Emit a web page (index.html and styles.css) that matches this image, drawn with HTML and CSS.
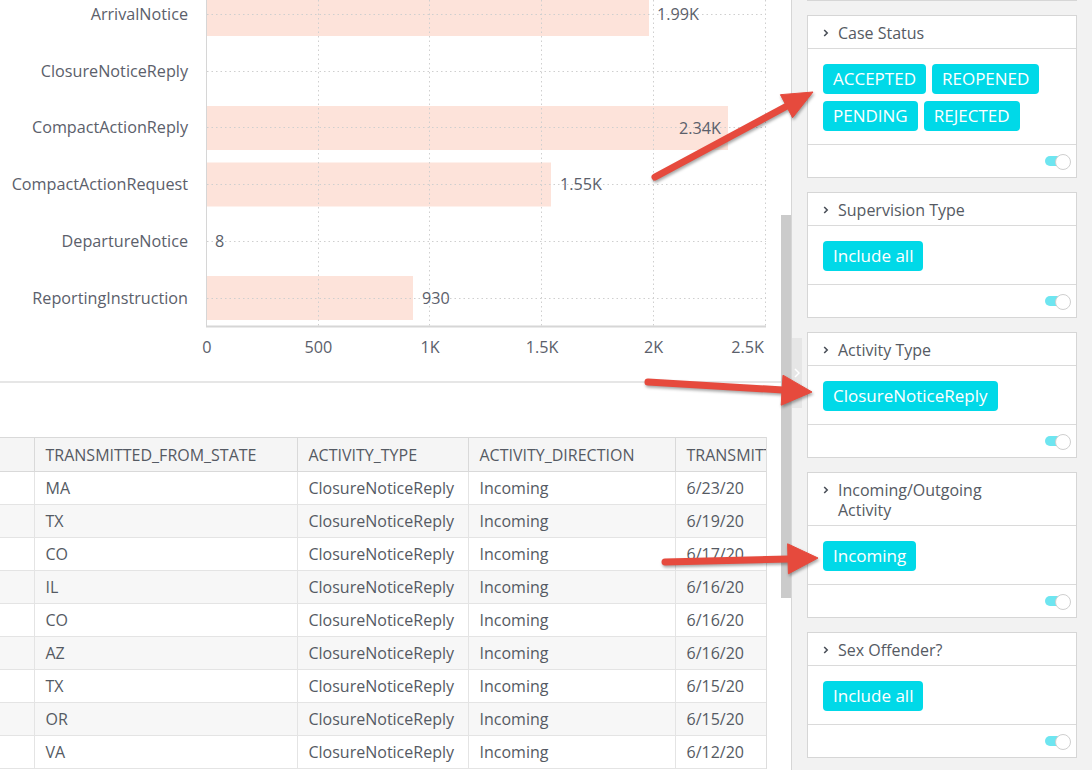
FILE: index.html
```html
<!DOCTYPE html>
<html lang="en">
<head>
<meta charset="utf-8">
<title>Activity Dashboard</title>
<link rel="stylesheet" href="styles.css">
</head>
<body>
<div class="app">
  <main class="main">
    <div class="content">
      <div class="chart">
        <svg class="chart-svg" width="781" height="381" viewBox="0 0 781 381">
          <g class="bars">
            <rect x="207" y="-8" width="442" height="44"/>
            <rect x="207" y="106" width="521" height="44"/>
            <rect x="207" y="162.5" width="344" height="44"/>
            <rect x="207" y="276" width="206" height="44"/>
          </g>
          <g class="gridlines">
            <line x1="207" x2="766" y1="14.5" y2="14.5"/>
            <line x1="207" x2="766" y1="71.5" y2="71.5"/>
            <line x1="207" x2="766" y1="127.5" y2="127.5"/>
            <line x1="207" x2="766" y1="184.5" y2="184.5"/>
            <line x1="207" x2="766" y1="241.5" y2="241.5"/>
            <line x1="207" x2="766" y1="298.5" y2="298.5"/>
            <line x1="318.5" x2="318.5" y1="0" y2="326"/>
            <line x1="429.5" x2="429.5" y1="0" y2="326"/>
            <line x1="541.5" x2="541.5" y1="0" y2="326"/>
            <line x1="653.5" x2="653.5" y1="0" y2="326"/>
            <line x1="765.5" x2="765.5" y1="0" y2="326"/>
          </g>
          <g class="axes">
            <line x1="206.5" x2="206.5" y1="0" y2="327"/>
            <line x1="206" x2="766" y1="326.5" y2="326.5" class="xaxis"/>
          </g>
          <g class="cat-labels">
            <text x="188" y="19.5">ArrivalNotice</text>
            <text x="188" y="76.5">ClosureNoticeReply</text>
            <text x="188" y="133">CompactActionReply</text>
            <text x="188" y="190">CompactActionRequest</text>
            <text x="188" y="247">DepartureNotice</text>
            <text x="188" y="303.5">ReportingInstruction</text>
          </g>
          <g class="val-labels">
            <text x="657" y="19.5">1.99K</text>
            <text x="721" y="133.5" class="end">2.34K</text>
            <text x="560" y="190">1.55K</text>
            <text x="215" y="247">8</text>
            <text x="422" y="304">930</text>
          </g>
          <g class="ticks">
            <text x="207" y="353">0</text>
            <text x="318.5" y="353">500</text>
            <text x="430" y="353">1K</text>
            <text x="542" y="353">1.5K</text>
            <text x="653.5" y="353">2K</text>
            <text x="764" y="353" class="end">2.5K</text>
          </g>
        </svg>
      </div>

      <div class="table-wrap">
        <table class="grid">
          <colgroup>
            <col class="c1"><col class="c2"><col class="c3"><col class="c4"><col class="c5">
          </colgroup>
          <thead>
            <tr><th></th><th>TRANSMITTED_FROM_STATE</th><th>ACTIVITY_TYPE</th><th>ACTIVITY_DIRECTION</th><th>TRANSMITTED_DATE</th></tr>
          </thead>
          <tbody>
            <tr><td></td><td>MA</td><td>ClosureNoticeReply</td><td>Incoming</td><td>6/23/20</td></tr>
            <tr><td></td><td>TX</td><td>ClosureNoticeReply</td><td>Incoming</td><td>6/19/20</td></tr>
            <tr><td></td><td>CO</td><td>ClosureNoticeReply</td><td>Incoming</td><td>6/17/20</td></tr>
            <tr><td></td><td>IL</td><td>ClosureNoticeReply</td><td>Incoming</td><td>6/16/20</td></tr>
            <tr><td></td><td>CO</td><td>ClosureNoticeReply</td><td>Incoming</td><td>6/16/20</td></tr>
            <tr><td></td><td>AZ</td><td>ClosureNoticeReply</td><td>Incoming</td><td>6/16/20</td></tr>
            <tr><td></td><td>TX</td><td>ClosureNoticeReply</td><td>Incoming</td><td>6/15/20</td></tr>
            <tr><td></td><td>OR</td><td>ClosureNoticeReply</td><td>Incoming</td><td>6/15/20</td></tr>
            <tr><td></td><td>VA</td><td>ClosureNoticeReply</td><td>Incoming</td><td>6/12/20</td></tr>
          </tbody>
        </table>
      </div>
    </div>
    <div class="vscroll"><div class="thumb"></div></div>
  </main>

  <aside class="sidebar">
    <div class="handle">
      <svg width="6" height="10" viewBox="0 0 6 10"><polyline points="1,1 5,5 1,9" fill="none" stroke="#ffffff" stroke-width="1.5"/></svg>
    </div>
    <div class="cards">
      <div class="card stub"></div>

      <section class="card">
        <header class="card-head">
          <span class="chev"><svg width="6" height="8" viewBox="0 0 6 8"><polyline points="1.2,1 4.2,4 1.2,7" fill="none" stroke="#4a4f58" stroke-width="1.6"/></svg></span>
          <span class="title">Case Status</span>
        </header>
        <div class="card-body">
          <span class="pill">ACCEPTED</span>
          <span class="pill">REOPENED</span>
          <span class="pill">PENDING</span>
          <span class="pill">REJECTED</span>
        </div>
        <footer class="card-foot"><span class="toggle"></span></footer>
      </section>

      <section class="card">
        <header class="card-head">
          <span class="chev"><svg width="6" height="8" viewBox="0 0 6 8"><polyline points="1.2,1 4.2,4 1.2,7" fill="none" stroke="#4a4f58" stroke-width="1.6"/></svg></span>
          <span class="title">Supervision Type</span>
        </header>
        <div class="card-body">
          <span class="pill">Include all</span>
        </div>
        <footer class="card-foot"><span class="toggle"></span></footer>
      </section>

      <section class="card">
        <header class="card-head">
          <span class="chev"><svg width="6" height="8" viewBox="0 0 6 8"><polyline points="1.2,1 4.2,4 1.2,7" fill="none" stroke="#4a4f58" stroke-width="1.6"/></svg></span>
          <span class="title">Activity Type</span>
        </header>
        <div class="card-body">
          <span class="pill">ClosureNoticeReply</span>
        </div>
        <footer class="card-foot"><span class="toggle"></span></footer>
      </section>

      <section class="card">
        <header class="card-head">
          <span class="chev"><svg width="6" height="8" viewBox="0 0 6 8"><polyline points="1.2,1 4.2,4 1.2,7" fill="none" stroke="#4a4f58" stroke-width="1.6"/></svg></span>
          <span class="title">Incoming/Outgoing Activity</span>
        </header>
        <div class="card-body">
          <span class="pill">Incoming</span>
        </div>
        <footer class="card-foot"><span class="toggle"></span></footer>
      </section>

      <section class="card">
        <header class="card-head">
          <span class="chev"><svg width="6" height="8" viewBox="0 0 6 8"><polyline points="1.2,1 4.2,4 1.2,7" fill="none" stroke="#4a4f58" stroke-width="1.6"/></svg></span>
          <span class="title">Sex Offender?</span>
        </header>
        <div class="card-body">
          <span class="pill">Include all</span>
        </div>
        <footer class="card-foot"><span class="toggle"></span></footer>
      </section>
    </div>
  </aside>
</div>

<svg class="annotations" width="1092" height="770" viewBox="0 0 1092 770">
  <g class="arrow">
    <line x1="655" y1="177" x2="787" y2="106"/>
    <polygon points="813,92 780.4,94.7 792.6,117.7"/>
  </g>
  <g class="arrow">
    <line x1="648" y1="382" x2="783" y2="390"/>
    <polygon points="812,392 783,375.2 781.2,405.2"/>
  </g>
  <g class="arrow">
    <line x1="665" y1="562" x2="789" y2="559"/>
    <polygon points="818,558 787.6,543.8 788.4,573.8"/>
  </g>
</svg>
</body>
</html>
```

FILE: styles.css
```css
* { box-sizing: border-box; }

html, body {
  margin: 0;
  padding: 0;
}

body {
  width: 1092px;
  height: 770px;
  overflow: hidden;
  position: relative;
  background: #ffffff;
  font-family: "Open Sans", "Liberation Sans", sans-serif;
  font-size: 16px;
  color: #555a63;
}

.app {
  display: flex;
  height: 770px;
}

/* ---------- main area ---------- */
.main {
  display: flex;
  width: 791px;
  flex: none;
}

.content {
  width: 781px;
  overflow: hidden;
}

.chart {
  height: 383px;
  border-bottom: 2px solid #e6e6e6;
}

.chart-svg { display: block; }

.chart-svg text {
  font-family: "Open Sans", "Liberation Sans", sans-serif;
  font-size: 16.2px;
  fill: #5b606b;
}

.bars rect { fill: #fde3da; }

.gridlines line {
  stroke: #cfcfcf;
  stroke-width: 1;
  stroke-dasharray: 1.5 3;
}

.axes line {
  stroke: #d6d6d6;
  stroke-width: 1;
}

.axes .xaxis { stroke-width: 2; }

.cat-labels text { text-anchor: end; }
.ticks text { text-anchor: middle; }
.chart-svg text.end { text-anchor: end; }

.table-wrap {
  margin-top: 54px;
  width: 767px;
  overflow: hidden;
  border-right: 1px solid #dddddd;
}

.grid {
  border-collapse: collapse;
  table-layout: fixed;
  width: 875px;
}

.grid .c1 { width: 34px; }
.grid .c2 { width: 263px; }
.grid .c3 { width: 171px; }
.grid .c4 { width: 207px; }
.grid .c5 { width: 200px; }

.grid th,
.grid td {
  height: 33px;
  padding: 0 11px;
  border: 1px solid #e4e4e4;
  text-align: left;
  font-weight: 400;
  white-space: nowrap;
  overflow: hidden;
  color: #555a63;
  font-size: 16px;
}

.grid th {
  height: 34px;
  background: #f5f5f5;
  border-color: #d9d9d9;
}

.grid tr > :first-child { border-left: none; }

.grid tbody tr:nth-child(even) td { background: #f7f7f7; }

.vscroll {
  width: 10px;
  flex: none;
}

.thumb {
  margin-top: 215px;
  height: 383px;
  background: #cbcbcb;
}

/* ---------- sidebar ---------- */
.sidebar {
  flex: 1;
  position: relative;
  background: #f2f2f2;
  border-left: 1px solid #d6d6d6;
  padding: 0 15px;
  overflow: hidden;
}

.handle {
  position: absolute;
  left: 0;
  top: 338px;
  width: 10px;
  height: 70px;
  background: #e6e6e6;
  display: flex;
  align-items: center;
  justify-content: center;
}

.cards {
  display: flex;
  flex-direction: column;
  gap: 14px;
}

.card {
  background: #ffffff;
  border: 1px solid #d6d6d6;
}

.stub {
  height: 22px;
  margin-top: -21px;
  flex: none;
}

.card-head {
  display: flex;
  align-items: flex-start;
  padding: 7px 60px 5px 15px;
  line-height: 20px;
  border-bottom: 1px solid #dadada;
  color: #555a63;
}

.chev {
  flex: none;
  width: 15px;
  height: 20px;
  display: flex;
  align-items: center;
}

.chev svg { display: block; }

.card-body {
  display: flex;
  flex-wrap: wrap;
  gap: 7px 6px;
  padding: 15px 15px 13px;
  border-bottom: 1px solid #dadada;
}

.pill {
  height: 30px;
  line-height: 30px;
  padding: 0 10px;
  border-radius: 4px;
  background: #00d9e8;
  color: #ffffff;
  font-size: 17px;
  white-space: nowrap;
}

.card-foot {
  height: 32px;
  display: flex;
  align-items: center;
  justify-content: flex-end;
  padding-right: 5px;
}

.toggle {
  position: relative;
  width: 26px;
  height: 14px;
}

.toggle::before {
  content: "";
  position: absolute;
  left: 0;
  top: 2px;
  width: 20px;
  height: 10px;
  border-radius: 5px;
  background: #6ee5f0;
}

.toggle::after {
  content: "";
  position: absolute;
  right: 0;
  top: 0;
  width: 14px;
  height: 14px;
  border-radius: 50%;
  background: #ffffff;
  border: 1px solid #cfcfcf;
}

/* ---------- annotation arrows ---------- */
.annotations {
  position: absolute;
  left: 0;
  top: 0;
  pointer-events: none;
  filter: drop-shadow(1px 2px 1.5px rgba(0, 0, 0, 0.35));
}

.arrow line {
  stroke: #e64a3d;
  stroke-width: 7;
  stroke-linecap: round;
}

.arrow polygon {
  fill: #e64a3d;
  stroke: #e64a3d;
  stroke-width: 1;
  stroke-linejoin: round;
}
```
